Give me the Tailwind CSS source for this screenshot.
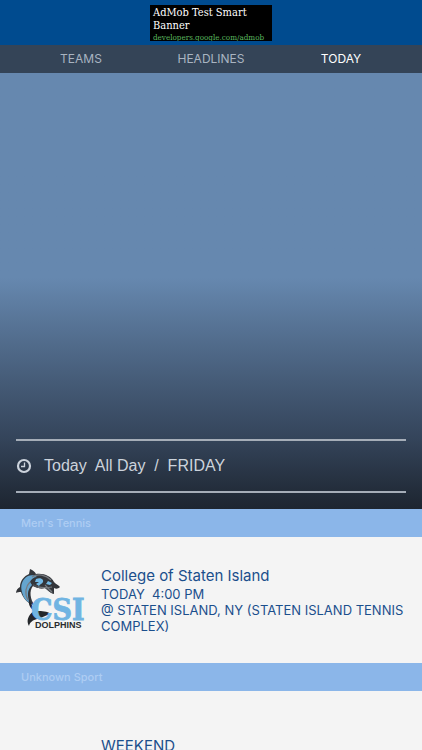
<!DOCTYPE html>
<html lang="en">

<head>
    <meta charset="UTF-8">
    <meta name="viewport" content="width=device-width, initial-scale=1.0">
    <title>Today</title>
    <script src="https://cdn.jsdelivr.net/npm/@tailwindcss/browser@4"></script>
</head>

<body class="h-screen overflow-hidden bg-[#f4f4f4] font-['Inter',sans-serif] text-[#1b4f8c]">
    <!-- ad banner -->
    <div class="flex justify-center bg-[#004b8f] pt-[5px] pb-1">
        <a href="#" class="block h-9 w-[122px] overflow-hidden bg-black px-[3px] pt-px font-['DejaVu_Serif_Condensed','Liberation_Serif',serif] text-[11px] leading-[13px] text-white">
            <span class="block">AdMob Test Smart</span>
            <span class="block">Banner</span>
            <span class="block text-[8px] leading-[12px] whitespace-nowrap text-[#5bb85f]">developers.google.com/admob</span>
        </a>
    </div>
    <nav class="grid h-7 grid-cols-3 items-center bg-[#344457] px-4 text-center text-[12px] text-[#a9b4c1]">
        <a href="#">TEAMS</a>
        <a href="#">HEADLINES</a>
        <a href="#" class="text-white">TODAY</a>
    </nav>
    <main>
        <section class="flex h-[436px] flex-col justify-end bg-linear-to-b from-[#6688af] from-47% via-[#34445a] via-84% to-[#1d2530] px-4 pb-4">
            <div class="flex items-center gap-3 border-y-2 border-[#a5adb8] py-[13px] text-[#ccd3dc]">
                <svg class="size-4" viewBox="0 0 16 16" fill="none" stroke="currentColor">
                    <circle cx="8" cy="8" r="6" stroke-width="2.200" />
                    <path d="M8.500 4.500V8.500H5" stroke-width="1.300" />
                </svg>
                <h1 class="font-['Liberation_Sans',sans-serif] text-[16px] leading-6 whitespace-pre">Today  All Day  /  FRIDAY</h1>
            </div>
        </section>
        <h2 class="bg-[#8bb6e9] px-[21px] text-[11px] leading-7 font-medium text-[#aecdf3]">Men's Tennis</h2>
        <article class="flex items-center gap-[15px] px-4 py-[29px]">
            <svg class="h-[66px] w-[70px] shrink-0" viewBox="0 0 70 66" role="img" aria-label="CSI Dolphins">
                <!-- body -->
                <path d="M13 7 14 2c3 1 5 3 6 5 8-1 15 2 18 8 1 2 5 3 6 5-2 2-4 2-6 1l0 6c-4-1-6-4-9-6-4 1-8 0-12-2-4 5-3 13 2 20-6-2-12-7-14-14-2 0-4 0-5 1 0-3 2-5 4-6C4 14 8 9 13 7Z" fill="#33363b" />
                <path d="M12 9c-6 3-8 10-6 16 1 5 4 9 8 11-3-7-3-13 2-18l-2-3c1-3 4-5 7-5-3-2-6-2-9-1Z" fill="#65a5cf" />
                <path d="M17 17c6 3 12 2 17 5l4 5c-4-1-6-4-9-6-4 1-8 0-12-2Z" fill="#4b4d52" />
                <path d="M20 12c4-2 8 0 7 3-1 2-3 2-4 4l-3-2 3-2-4 0ZM32 14l4 2-2 2-4-1Z" fill="#73b9e5" />
                <path d="M14 15c-4 4-6 11-2 18M16 10c6-4 14-2 19 3M22 20c5 1 9 1 14 0M29 18l7 7" fill="none" stroke="#777b80" stroke-width="1.200" />
                <!-- tail -->
                <path d="M13 32c2 5 4 9 8 12 5 0 10 0 14 3-5 1-9 4-14 5-4 1-7 3-8 7-3-5-1-11 5-15-4-3-6-7-5-12Z" fill="#24272b" />
                <text x="15" y="53" class="font-['DejaVu_Serif_Condensed','DejaVu_Serif',serif] text-[30px] font-bold" fill="#70b4e2" stroke="#70b4e2" stroke-width="0.800">CSI</text>
                <text x="19" y="61" class="font-['Liberation_Sans',sans-serif] text-[9px] font-bold" fill="#292b2e">DOLPHINS</text>
            </svg>
            <div class="text-[13px] leading-4">
                <h3 class="text-[15px] leading-5">College of Staten Island</h3>
                <p class="whitespace-pre">TODAY  4:00 PM</p>
                <p>@ STATEN ISLAND, NY (STATEN ISLAND TENNIS COMPLEX)</p>
            </div>
        </article>
        <h2 class="bg-[#8bb6e9] px-[21px] text-[11px] leading-7 font-medium text-[#aecdf3]">Unknown Sport</h2>
        <article class="flex gap-[15px] px-4 py-[45px]">
            <div class="w-[70px] shrink-0"></div>
            <h3 class="text-[15px] leading-5">WEEKEND</h3>
        </article>
    </main>
</body>

</html>
